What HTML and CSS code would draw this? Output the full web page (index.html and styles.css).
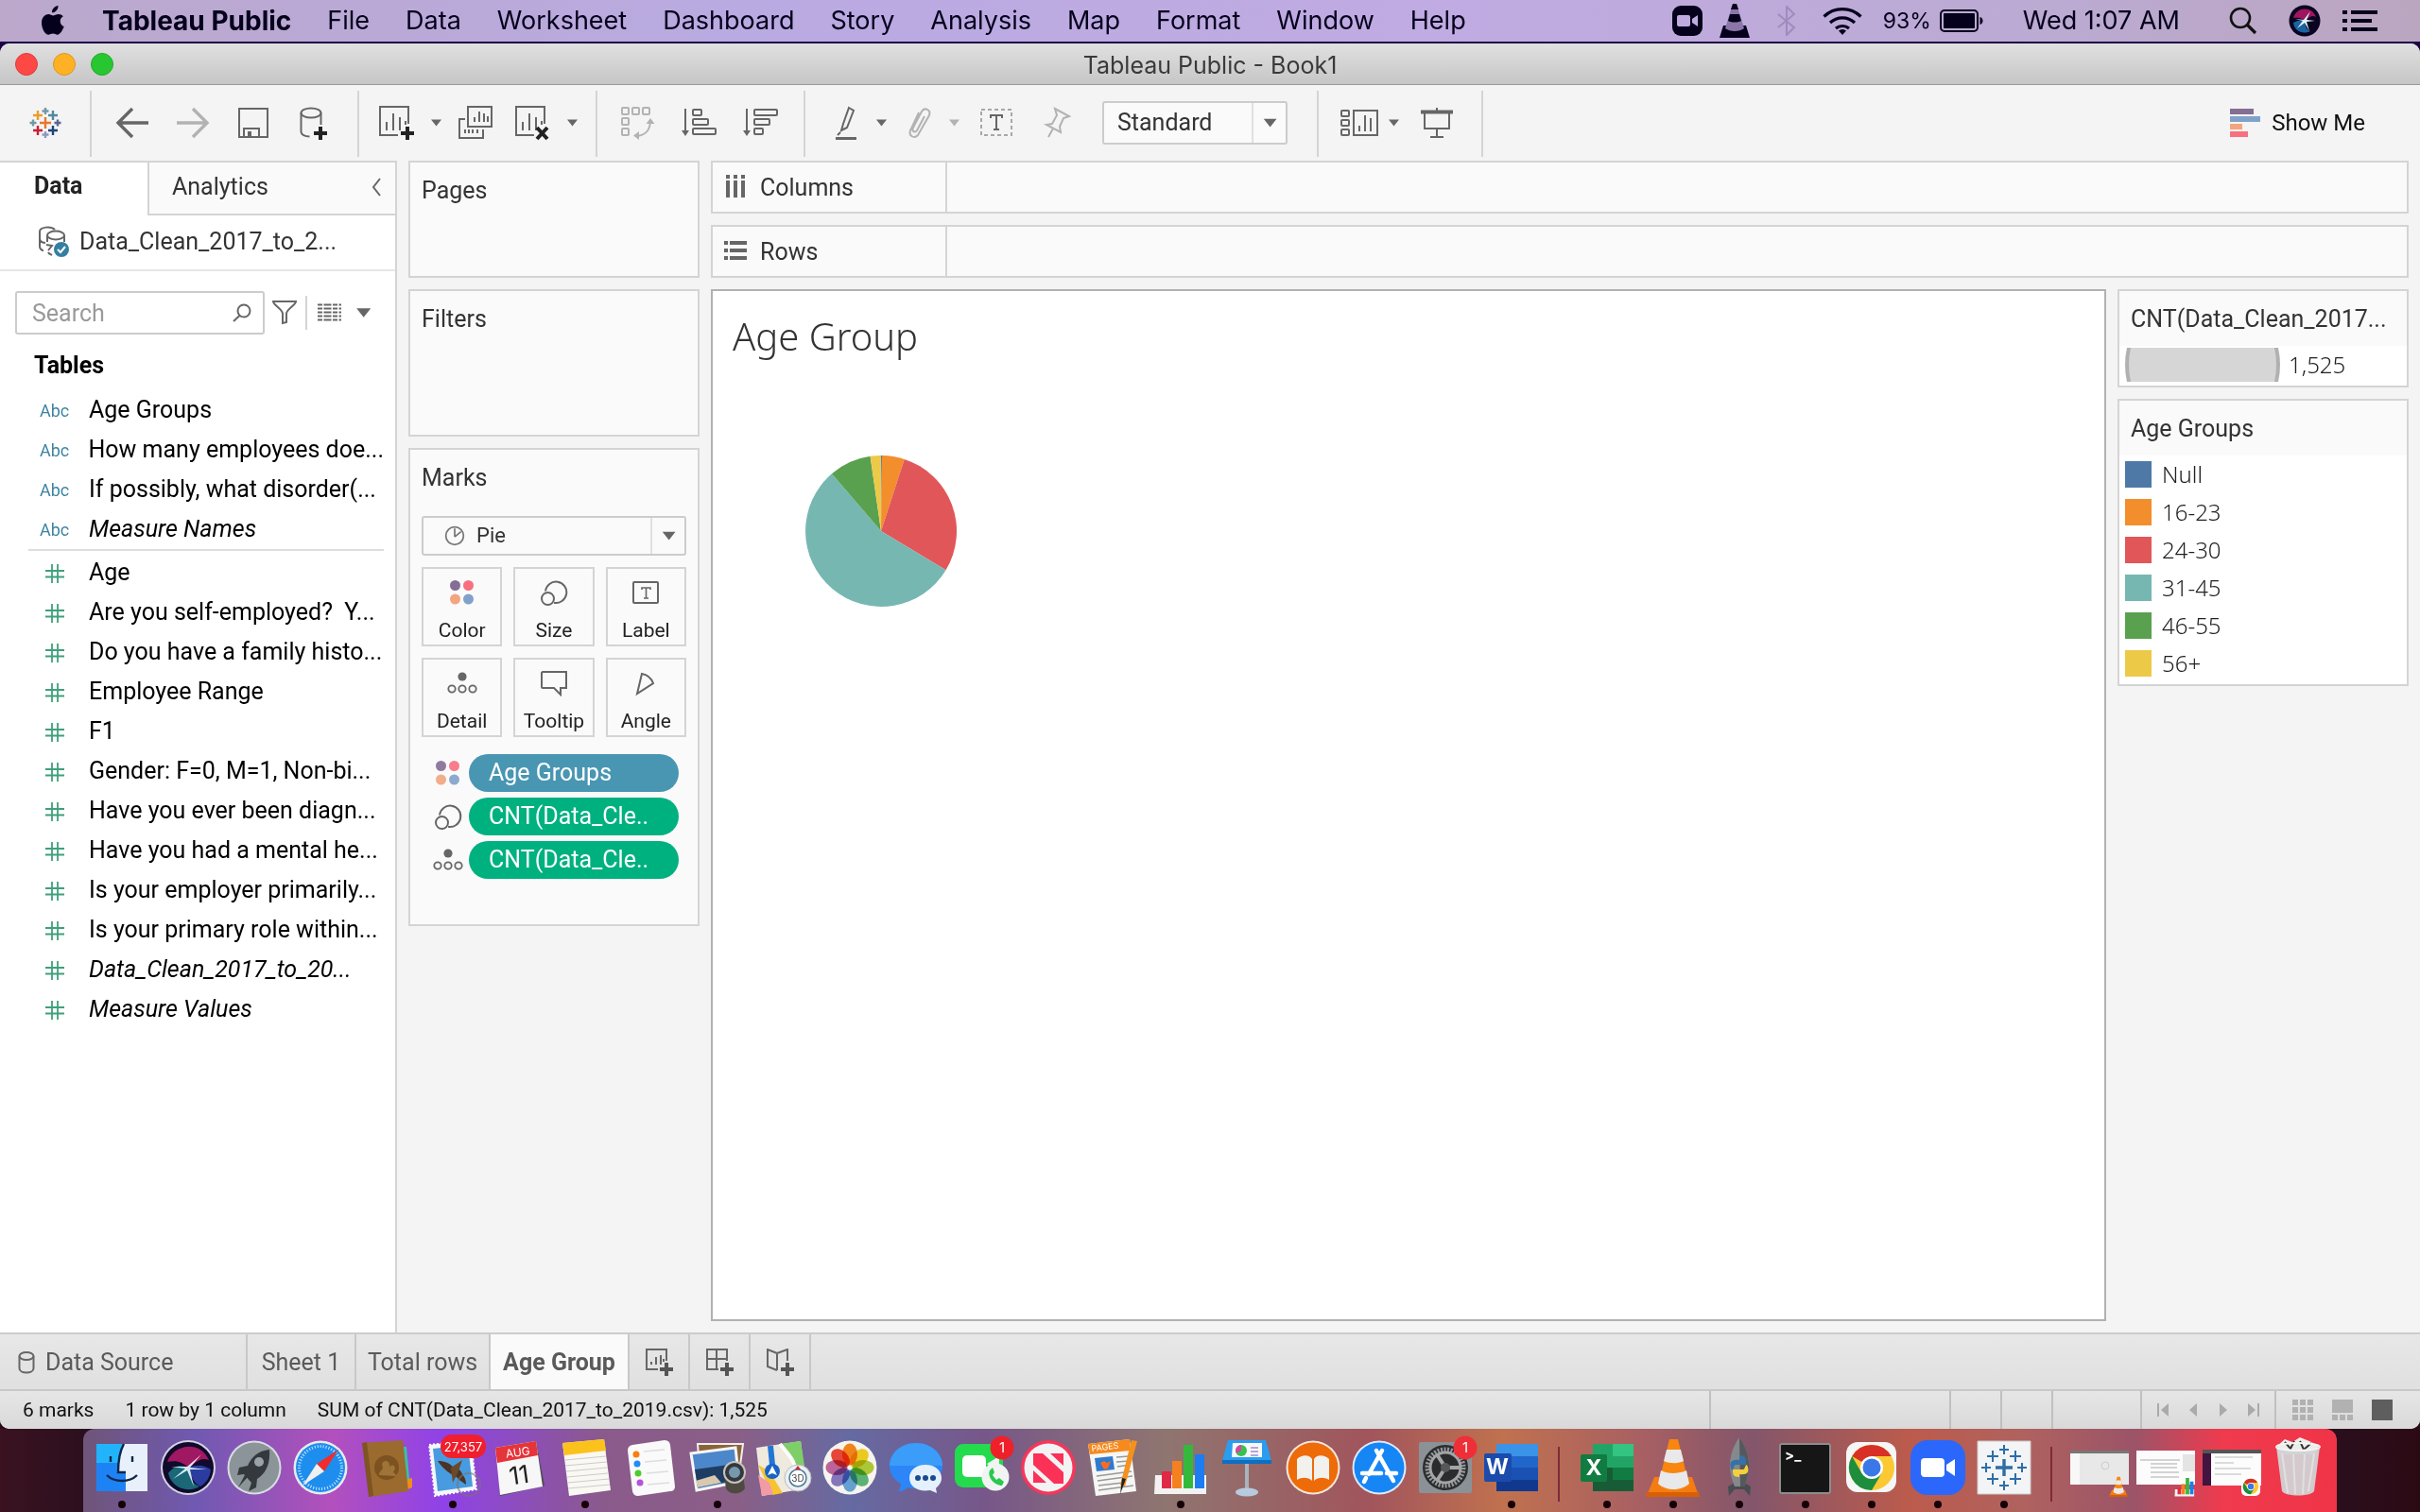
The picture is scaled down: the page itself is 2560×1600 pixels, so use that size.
FILE: index.html
```html
<!DOCTYPE html>
<html lang="en">
<head>
<meta charset="utf-8">
<title>Tableau Public - Book1</title>
<link rel="stylesheet" href="styles.css">
</head>
<body>
<svg class="sprite" aria-hidden="true">
  <symbol id="caret" viewBox="0 0 16 16"><path d="M3 4.500h11l-5.500 7z" fill="currentColor"/></symbol>
  <symbol id="hash" viewBox="0 0 20 20"><path d="M7 0v20M13 0v20M0 7h20M0 13.500h20" stroke="#3fa07c" stroke-width="1.800" fill="none"/></symbol>
  <symbol id="dots4" viewBox="0 0 28 28"><circle cx="6.500" cy="6.500" r="5.500" fill="#856e96"/><circle cx="20.500" cy="6.500" r="5.500" fill="#f87080"/><circle cx="6.500" cy="21" r="5.500" fill="#f2a57e"/><circle cx="20.500" cy="21" r="5.500" fill="#80a2ca"/></symbol>
  <symbol id="size" viewBox="0 0 30 28"><g fill="none" stroke="#666" stroke-width="2"><path d="M6 12.500a11.200 11.200 0 1 1 9 12.300"/><circle cx="8.500" cy="20.500" r="6.500"/></g></symbol>
  <symbol id="detail" viewBox="0 0 32 24"><circle cx="16" cy="5" r="4.600" fill="#666"/><g fill="none" stroke="#666" stroke-width="1.800"><circle cx="5" cy="18" r="3.700"/><circle cx="16" cy="18" r="3.700"/><circle cx="27" cy="18" r="3.700"/></g></symbol>
  <symbol id="cone" viewBox="0 0 64 64"><path d="M12 42h40l7 20H4z" fill="#f57c12"/><path d="M4 58h55l1 5H3z" fill="#d95f06"/><path d="M28 2h9l12 49c-9 7-24 7-33 0z" fill="#f8860f"/><path d="M25 13h15l3 12c-6 3-15 3-21 0zM19 35c7 4 19 4 27 0l3 14c-9 8-24 8-33 0z" fill="#e9e9ec"/></symbol>
  <symbol id="chrome" viewBox="0 0 64 64"><circle cx="32" cy="32" r="24" fill="#fcc934"/><path d="M32 32 11.200 20A24 24 0 0 1 52.800 20H32z" fill="#d93025"/><path d="M11.200 20A24 24 0 0 0 32 56l10.500-18L32 32l-10.500 6z" fill="#1e8e3e"/><circle cx="32" cy="32" r="12" fill="#fff"/><circle cx="32" cy="32" r="9.500" fill="#3b78e7"/></symbol>
  <symbol id="bars" viewBox="0 0 64 64"><path d="M5 40h54v20H4z" fill="#f2f2f2"/><path d="M12 36h10v18H12z" fill="#e02a45"/><path d="M23 25h10v29H23z" fill="#f58020"/><path d="M35 8h10v46H35z" fill="#35b93c"/><path d="M47 18h10v36H47z" fill="#1d7df0"/></symbol>
  <symbol id="siri" viewBox="0 0 64 64"><circle cx="32" cy="32" r="29" fill="#d6d2e0"/><circle cx="32" cy="32" r="27" fill="#100a2c"/><path d="M10 26c6-18 34-24 44-2-10-4-14 4-22 8-6-6-12-8-22-6z" fill="#c41a70" opacity=".8"/><path d="M11 38c8-10 16-8 21-6 2 8 2 16 12 20-14 8-30 0-33-14z" fill="#1f9aa0" opacity=".65"/><path d="M32 32c10-4 18-2 24 2-1 10-6 15-11 18-8-4-10-12-13-20z" fill="#3a58e0" opacity=".65"/><path d="M14 31l17 0 15-13-12 14 18 2-18 0 4 18-7-17-15 9 13-11z" fill="#e8fbff" opacity=".9"/></symbol>
</svg>

<header class="menubar">
  <nav class="menus">
    <svg class="apple" viewBox="0 0 28 34"><path fill="#05001c" d="M19.500 1c.3 3.800-3 7.500-6.500 7.300C12.600 4.800 16 1.300 19.500 1zM24.800 12.200c-4.600 2.800-3.900 9 .9 10.900-1.200 3.500-4 8.700-7 8.700-1.800 0-2.500-1.200-4.700-1.200s-3 1.200-4.700 1.200C5.300 31.800 2 24.500 2 19.200c0-6.500 4.300-9.200 7.200-9.200 2 0 3.800 1.400 5 1.400 1.300 0 3.200-1.500 5.800-1.500 1.700 0 3.500.7 4.800 2.300z"/></svg>
    <a href="#" class="app">Tableau Public</a><a href="#">File</a><a href="#">Data</a><a href="#">Worksheet</a><a href="#">Dashboard</a><a href="#">Story</a><a href="#">Analysis</a><a href="#">Map</a><a href="#">Format</a><a href="#">Window</a><a href="#">Help</a>
  </nav>
  <div class="extras">
    <svg width="32" height="32" viewBox="0 0 32 32"><rect width="32" height="32" rx="9" fill="#05001c"/><rect x="5" y="10" width="14" height="12" rx="2" fill="#c0abe0"/><path d="M21 14l6-4v12l-6-4z" fill="#c0abe0"/></svg>
    <svg class="vlc" width="32" height="36" viewBox="0 0 32 36"><path d="M4 23h24l4 13H0z" fill="#05001c"/><path d="M14 0h4l8 26c-5 4-15 4-20 0z" fill="#8a76a8"/><path d="M14 0h4l2 6h-8zM11 11h10l2 7c-4 2-10 2-14 0z" fill="#05001c"/></svg>
    <svg width="20" height="32" viewBox="0 0 20 32"><path d="M1 9l17 14-8 8V1l8 8L1 23" fill="none" stroke="#9f8cbe" stroke-width="2"/></svg>
    <svg class="wifi" width="42" height="30" viewBox="0 0 42 30"><g fill="none" stroke="#05001c" stroke-width="3.200"><path d="M1.500 10.500a28 28 0 0 1 39 0"/><path d="M8 17a19 19 0 0 1 26 0"/><path d="M14 23a11 11 0 0 1 14 0"/></g><path d="M17 25.500a6 6 0 0 1 8 0L21 30z" fill="#05001c"/></svg>
    <span class="percent">93%</span>
    <svg width="46" height="24" viewBox="0 0 46 24"><rect x="1" y="1" width="39" height="22" rx="4" fill="none" stroke="#05001c" stroke-width="2"/><rect x="4" y="4" width="33" height="16" rx="1" fill="#05001c"/><path d="M42.500 8c4 1 4 7 0 8z" fill="#05001c"/></svg>
    <span class="clock">Wed 1:07 AM</span>
    <svg width="30" height="30" viewBox="0 0 30 30"><g fill="none" stroke="#111" stroke-width="2.600"><circle cx="12" cy="12" r="10"/><path d="M19 19l9 9" stroke-width="3.200"/></g></svg>
    <svg class="siri-mini" width="34" height="34" viewBox="0 0 34 34"><circle cx="17" cy="17" r="16.500" fill="#0a0420"/><path d="M5 14C8 2 25 1 29 13c-5-3-8 1-12 4-3-3-7-4-12-3z" fill="#c41a70" opacity=".8"/><path d="M5 19c5-3 8-3 12-2 1 5 1 9 6 11-8 4-17 0-18-9z" fill="#1f7cc0" opacity=".8"/><path d="M7 15l9 1 7-9-4 9 9 1-9 1 3 10-5-9-8 6 6-8z" fill="#dffaff"/></svg>
    <svg width="38" height="22" viewBox="0 0 38 22"><path d="M0 2h5M9 2h28M0 11h5M9 11h22M0 20h5M9 20h28" stroke="#05001c" stroke-width="4"/></svg>
  </div>
</header>

<main class="window">
  <div class="titlebar">
    <div class="lights"><button class="red" aria-label="Close"></button><button class="amber" aria-label="Minimize"></button><button class="green" aria-label="Zoom"></button></div>
    <h1>Tableau Public - Book1</h1>
    <span></span>
  </div>

  <div class="toolbar">
    <div class="group g-logo">
      <button aria-label="Start page"><svg class="ic" viewBox="0 0 40 40"><g fill="none" stroke-width="2.400"><path d="M20 14v12M14 20h12" stroke="#e8762c"/><path d="M12 7v10M7 12h10" stroke="#eb9d2e"/><path d="M28 7v10M23 12h10" stroke="#4f8a9e"/><path d="M12 23v10M7 28h10" stroke="#c72035"/><path d="M28 23v10M23 28h10" stroke="#1f447e"/><path d="M20 4v7M16.500 7.500h7" stroke="#7199a6"/><path d="M20 29v7M16.500 32.500h7" stroke="#8a9ac0"/><path d="M7 16.500v7M3.500 20h7" stroke="#7199a6"/><path d="M33 16.500v7M29.500 20h7" stroke="#5b6591"/></g></svg></button>
    </div>
    <div class="group g-file">
      <button aria-label="Back"><svg class="ic" viewBox="0 0 40 40"><path d="M37 20H5M20 5L5 20l15 15" fill="none" stroke="#666" stroke-width="3.400"/></svg></button>
      <button aria-label="Forward"><svg class="ic" viewBox="0 0 40 40"><path d="M3 20h32M20 5l15 15-15 15" fill="none" stroke="#b2b2b2" stroke-width="3.400"/></svg></button>
      <button aria-label="Save"><svg class="ic" viewBox="0 0 40 40"><g fill="none" stroke="#666" stroke-width="2"><path d="M5 5h30v30H5z"/><path d="M10 35v-9h16v9"/></g><path d="M14 29h4v6h-4z" fill="#666"/></svg></button>
      <button aria-label="New data source"><svg class="ic" viewBox="0 0 40 40"><g fill="none" stroke="#666" stroke-width="2"><ellipse cx="17" cy="9.500" rx="10.500" ry="5"/><path d="M6.500 9.500v20c0 3 4 5 9 5M27.500 9.500V22"/></g><path d="M27 24v14M20 31h14" stroke="#222" stroke-width="4"/></svg></button>
    </div>
    <div class="group g-sheet">
      <button aria-label="New worksheet"><svg class="ic" viewBox="0 0 40 40"><path d="M22 33H3V3h30v18M10 28v-9M17 28V10M24 28V14M30 22v-4" fill="none" stroke="#666" stroke-width="2"/><path d="M32 24v14M25 31h14" stroke="#222" stroke-width="4"/></svg></button>
      <button class="drop" aria-label="New worksheet options"><svg><use href="#caret"/></svg></button>
      <button aria-label="Duplicate"><svg class="ic" viewBox="0 0 40 40"><g fill="none" stroke="#666" stroke-width="2"><path d="M12 3h25v21H12zM19 19v-5M24 19V8M29 19v-9M33 19v-6M9 16H3v20h25v-9"/><path d="M9 31v-4M13 31v-4M17 31v-4M22 31v-4"/></g></svg></button>
      <button class="gap20" aria-label="Clear sheet"><svg class="ic" viewBox="0 0 40 40"><path d="M22 33H3V3h30v18M10 28v-9M17 28V10M24 28V14M30 22v-4" fill="none" stroke="#666" stroke-width="2"/><path d="M25 25l11 12M36 25L25 37" stroke="#222" stroke-width="4"/></svg></button>
      <button class="drop" aria-label="Clear options"><svg><use href="#caret"/></svg></button>
    </div>
    <div class="group g-sort">
      <button aria-label="Swap rows and columns"><svg class="ic" viewBox="0 0 40 40"><g fill="none" stroke="#b2b2b2" stroke-width="2"><rect x="3" y="4" width="7" height="7" rx="1"/><rect x="14" y="4" width="7" height="7" rx="1"/><rect x="25" y="4" width="7" height="7" rx="1"/><rect x="3" y="15" width="7" height="7" rx="1"/><rect x="3" y="26" width="7" height="7" rx="1"/><path d="M17 34c10 0 16-6 16-17"/></g><path d="M28.500 21l4.500-6 4.500 6zM21 29v9l-6-4.500z" fill="#b2b2b2"/></svg></button>
      <button aria-label="Sort ascending"><svg class="ic" viewBox="0 0 40 40"><g fill="none" stroke="#666" stroke-width="2"><path d="M5 5v26"/><rect x="13" y="6" width="9" height="6" rx="1"/><rect x="13" y="16" width="16" height="6" rx="1"/><rect x="13" y="26" width="24" height="6" rx="1"/></g><path d="M1 28h8l-4 6z" fill="#666"/></svg></button>
      <button aria-label="Sort descending"><svg class="ic" viewBox="0 0 40 40"><g fill="none" stroke="#666" stroke-width="2"><path d="M5 5v26"/><rect x="13" y="6" width="24" height="6" rx="1"/><rect x="13" y="16" width="16" height="6" rx="1"/><rect x="13" y="26" width="9" height="6" rx="1"/></g><path d="M1 28h8l-4 6z" fill="#666"/></svg></button>
    </div>
    <div class="group g-annot">
      <button aria-label="Highlight"><svg class="ic narrow" viewBox="0 0 32 40"><path d="M18 4l5 3-7 18-6 3 2-7zM9 30l-3 3" fill="none" stroke="#666" stroke-width="2"/><path d="M4 36.500h22" stroke="#666" stroke-width="3"/></svg></button>
      <button class="drop" aria-label="Highlight options"><svg><use href="#caret"/></svg></button>
      <button aria-label="Group members"><svg class="ic narrow" viewBox="0 0 32 40"><path d="M21 13l-8 15c-2 3-6 1-4-3l9-17c3-5 10-2 8 4L14 33c-4 4-10 1-8-5L15 9" fill="none" stroke="#b2b2b2" stroke-width="2"/></svg></button>
      <button class="drop dim" aria-label="Group options"><svg><use href="#caret"/></svg></button>
      <button aria-label="Show mark labels"><svg class="ic" viewBox="0 0 40 40"><rect x="4" y="6" width="32" height="27" fill="none" stroke="#a8a8a8" stroke-width="2" stroke-dasharray="4 3"/><path d="M14 15v-3h12v3M20 12v15M17 27h6" fill="none" stroke="#666" stroke-width="2"/></svg></button>
      <button class="pin" aria-label="Fix axes"><svg class="ic narrow" viewBox="0 0 32 40"><path d="M14 5l15 8-6 2-4 9 1 6-15-8 6-1 5-9zM12 26L7 35" fill="none" stroke="#b2b2b2" stroke-width="2"/></svg></button>
      <div class="select fit"><select aria-label="Fit"><option>Standard</option></select><svg><use href="#caret"/></svg></div>
    </div>
    <div class="group g-view">
      <button aria-label="Show cards"><svg class="ic" viewBox="0 0 40 40"><g fill="none" stroke="#666" stroke-width="2"><rect x="1" y="7" width="8" height="6" rx="1"/><rect x="1" y="17" width="8" height="6" rx="1"/><rect x="1" y="27" width="8" height="6" rx="1"/><path d="M14 7h25v26H14zM20 29v-6M26 29V12M32 29V15"/></g></svg></button>
      <button class="drop" aria-label="Card options"><svg><use href="#caret"/></svg></button>
      <button aria-label="Presentation mode"><svg class="ic" viewBox="0 0 40 40"><path d="M3 8.500h34" stroke="#666" stroke-width="4"/><path d="M20 4v4M7 10v16h26V10M20 26v9M13 35h14" fill="none" stroke="#666" stroke-width="2"/></svg></button>
    </div>
    <button class="showme"><svg width="32" height="30" viewBox="0 0 32 30"><path d="M0 0h25v6H0z" fill="#856e96"/><path d="M0 8h32v6H0z" fill="#80a2ca"/><path d="M0 16h13v6H0z" fill="#f2a57e"/><path d="M0 24h19v6H0z" fill="#f87080"/></svg>Show Me</button>
  </div>

  <div class="work">
    <aside class="datapane">
      <div class="panetabs">
        <button class="on">Data</button>
        <button class="off">Analytics <svg width="12" height="20" viewBox="0 0 12 20"><path d="M10 1L3 10l7 9" fill="none" stroke="#666" stroke-width="2"/></svg></button>
      </div>
      <div class="source">
        <svg width="34" height="34" viewBox="0 0 34 34"><g fill="none" stroke="#666" stroke-width="2"><path d="M18 4C14 0 2 1 2 6v16c0 2 2 4 4 4M2 14c1 3 3 4 6 4"/><ellipse cx="19" cy="10" rx="9" ry="4.500"/><path d="M10 10v7M28 10v7M9 20l6 1-4 5M11 28c1 2 2 2 4 3"/></g><circle cx="25" cy="25" r="8" fill="#357ea3"/><path d="M21 25l3 3 5-6" fill="none" stroke="#fff" stroke-width="2"/></svg>
        <span>Data_Clean_2017_to_2...</span>
      </div>
      <div class="searchrow">
        <label class="search"><input type="text" placeholder="Search" aria-label="Search fields"><svg width="20" height="20" viewBox="0 0 20 20"><circle cx="12" cy="8" r="6.500" fill="none" stroke="#666" stroke-width="2"/><path d="M8 12.500L1 19" stroke="#666" stroke-width="2"/></svg></label>
        <button aria-label="Filter fields"><svg width="28" height="28" viewBox="0 0 28 28"><path d="M2 2h24c0 4-10 8-10 13v9l-4 1V15C12 10 2 6 2 2z" fill="none" stroke="#666" stroke-width="2"/></svg></button>
        <i class="vline"></i>
        <button aria-label="View options"><svg width="26" height="20" viewBox="0 0 26 20"><path d="M0 1.500h25M0 5.500h25M0 9.500h25M0 13.500h25M0 17.500h25" stroke="#666" stroke-width="2" stroke-dasharray="5 1.500 8 1.500"/></svg></button>
        <button class="big-caret" aria-label="Pane menu"><svg width="22" height="22"><use href="#caret"/></svg></button>
      </div>
      <h2>Tables</h2>
      <ul class="fields dims">
        <li><b>Abc</b>Age Groups</li><li><b>Abc</b>How many employees doe...</li><li><b>Abc</b>If possibly, what disorder(...</li><li class="it"><b>Abc</b>Measure Names</li>
      </ul>
      <ul class="fields measures">
        <li><svg><use href="#hash"/></svg>Age</li><li><svg><use href="#hash"/></svg>Are you self-employed?&nbsp; Y...</li><li><svg><use href="#hash"/></svg>Do you have a family histo...</li><li><svg><use href="#hash"/></svg>Employee Range</li><li><svg><use href="#hash"/></svg>F1</li><li><svg><use href="#hash"/></svg>Gender: F=0, M=1, Non-bi...</li><li><svg><use href="#hash"/></svg>Have you ever been diagn...</li><li><svg><use href="#hash"/></svg>Have you had a mental he...</li><li><svg><use href="#hash"/></svg>Is your employer primarily...</li><li><svg><use href="#hash"/></svg>Is your primary role within...</li><li class="it"><svg><use href="#hash"/></svg>Data_Clean_2017_to_20...</li><li class="it"><svg><use href="#hash"/></svg>Measure Values</li>
      </ul>
    </aside>

    <section class="cards">
      <div class="card pages"><h3>Pages</h3></div>
      <div class="card filters"><h3>Filters</h3></div>
      <div class="card marks">
        <h3>Marks</h3>
        <div class="select marktype"><svg class="lead" viewBox="0 0 20 20"><g fill="none" stroke="#777" stroke-width="1.600"><circle cx="10" cy="10" r="8.500"/><path d="M10 11V3M10 11l6-5"/></g></svg><select aria-label="Mark type"><option>Pie</option></select><svg><use href="#caret"/></svg></div>
        <div class="props">
          <button><svg width="28" height="28"><use href="#dots4"/></svg>Color</button>
          <button><svg width="30" height="28"><use href="#size"/></svg>Size</button>
          <button><svg width="28" height="28" viewBox="0 0 28 28"><g fill="none" stroke="#666" stroke-width="2"><rect x="1" y="3" width="26" height="22" rx="1"/><path d="M10 11V9h9v2M14.500 9v11M12 20h5" stroke-width="1.600"/></g></svg>Label</button>
          <button><svg width="32" height="28"><use href="#detail"/></svg>Detail</button>
          <button><svg width="28" height="28" viewBox="0 0 28 28"><path d="M2 2h25v17h-6v7l-7-7H2a1 1 0 0 1-1-1V3z" fill="none" stroke="#666" stroke-width="2"/></svg>Tooltip</button>
          <button><svg width="28" height="28" viewBox="0 0 28 28"><path d="M10 4c6 1 10 5 12 10L5 25z" fill="none" stroke="#666" stroke-width="2"/></svg>Angle</button>
        </div>
        <div class="pills">
          <div><svg width="28" height="28" opacity=".9"><use href="#dots4"/></svg><button class="blue">Age Groups</button></div>
          <div><svg width="30" height="28"><use href="#size"/></svg><button>CNT(Data_Cle..</button></div>
          <div><svg width="32" height="24"><use href="#detail"/></svg><button>CNT(Data_Cle..</button></div>
        </div>
      </div>
    </section>

    <section class="canvas">
      <div class="shelf"><h3><svg width="24" height="24" viewBox="0 0 24 24"><path d="M4 0v4M12 0v4M20 0v4M4 6v18M12 6v18M20 6v18" stroke="#666" stroke-width="4"/></svg>Columns</h3></div>
      <div class="shelf"><h3><svg width="24" height="24" viewBox="0 0 24 24"><path d="M0 4h4M6 4h18M0 12h4M6 12h18M0 20h4M6 20h18" stroke="#666" stroke-width="4"/></svg>Rows</h3></div>
      <div class="viz">
        <div class="sheet">
          <h2>Age Group</h2>
          <svg width="160" height="160" viewBox="0 0 160 160" role="img" aria-label="Age Group pie chart">
            <path d="M80 80V0A80 80 0 0 1 81 0z" fill="#4e79a7"/>
            <path d="M80 80L81 0A80 80 0 0 1 104.700 3.900z" fill="#f28e2b"/>
            <path d="M80 80L104.700 3.900A80 80 0 0 1 148.600 121.200z" fill="#e15759"/>
            <path d="M80 80L148.600 121.200A80 80 0 1 1 27.900 19.300z" fill="#76b7b2"/>
            <path d="M80 80L27.900 19.300A80 80 0 0 1 68.600 .8z" fill="#59a14f"/>
            <path d="M80 80L68.600 .8A80 80 0 0 1 80 0z" fill="#edc948"/>
          </svg>
        </div>
        <div class="legends">
          <div class="card legend"><h3>CNT(Data_Clean_2017...</h3>
            <div class="sizeitem"><svg width="164" height="36" viewBox="0 0 164 36"><path d="M2 0h160q4 18 0 36H2q-4-18 0-36z" fill="#b1b1b1"/><path d="M6 0h152q4 18 0 36H6q-4-18 0-36z" fill="#d6d6d6"/></svg>1,525</div></div>
          <div class="card legend"><h3>Age Groups</h3>
            <ul><li class="c1">Null</li><li class="c2">16-23</li><li class="c3">24-30</li><li class="c4">31-45</li><li class="c5">46-55</li><li class="c6">56+</li></ul></div>
        </div>
      </div>
    </section>
  </div>

  <div class="tabs">
    <button class="ds"><svg width="18" height="24" viewBox="0 0 18 24"><g fill="none" stroke="#666" stroke-width="2"><ellipse cx="9" cy="5" rx="7.500" ry="4"/><path d="M1.500 5v13c0 6 15 6 15 0V5"/></g></svg>Data Source</button>
    <button class="t1">Sheet 1</button><button class="t2">Total rows</button><button class="t3 on">Age Group</button>
    <button class="new" aria-label="New worksheet"><svg width="30" height="30" viewBox="0 0 30 30"><path d="M13 22H1V1h21v12M6 17v-3M11 17V9M16 17V7M19 14v-3" fill="none" stroke="#666" stroke-width="2"/><path d="M22 15v14M15 22h14" stroke="#555" stroke-width="4"/></svg></button>
    <button class="new" aria-label="New dashboard"><svg width="30" height="30" viewBox="0 0 30 30"><path d="M13 22H1V1h21v12M11 1v21M1 11h21" fill="none" stroke="#666" stroke-width="2"/><path d="M22 15v14M15 22h14" stroke="#555" stroke-width="4"/></svg></button>
    <button class="new" aria-label="New story"><svg width="30" height="30" viewBox="0 0 30 30"><path d="M11 23L1 19V1l10 4v18M11 5l11-4v12" fill="none" stroke="#666" stroke-width="2"/><path d="M22 15v14M15 22h14" stroke="#555" stroke-width="4"/></svg></button>
  </div>

  <footer class="status">
    <div class="facts"><span>6 marks</span><span>1 row by 1 column</span><span>SUM of CNT(Data_Clean_2017_to_2019.csv): 1,525</span></div>
    <i class="s1"></i><i class="s2"></i><i class="s2"></i><i class="s3"></i>
    <div class="pager">
      <button aria-label="First"><svg viewBox="0 0 16 16"><path d="M3 1v14" stroke="#aaa" stroke-width="2"/><path d="M14 1v14L6 8z" fill="#aaa"/></svg></button><button aria-label="Previous"><svg viewBox="0 0 16 16"><path d="M12 1v14L4 8z" fill="#aaa"/></svg></button><button aria-label="Next"><svg viewBox="0 0 16 16"><path d="M4 1v14l8-7z" fill="#aaa"/></svg></button><button aria-label="Last"><svg viewBox="0 0 16 16"><path d="M13 1v14" stroke="#aaa" stroke-width="2"/><path d="M2 1v14l8-7z" fill="#aaa"/></svg></button>
    </div>
    <div class="views">
      <button aria-label="Sheet sorter"><svg viewBox="0 0 22 22"><path d="M0 3h22M0 11h22M0 19h22" stroke="#b1b1b1" stroke-width="6" stroke-dasharray="6 2"/></svg></button><button aria-label="Filmstrip"><svg viewBox="0 0 22 22"><path d="M0 0h22v14H0z" fill="#b1b1b1"/><path d="M0 19h22" stroke="#b1b1b1" stroke-width="6" stroke-dasharray="6 2"/></svg></button><button aria-label="Show tabs"><svg viewBox="0 0 22 22"><path d="M0 0h22v22H0z" fill="#5e5e5e"/></svg></button>
    </div>
  </footer>
</main>

<footer class="desk">
  <div class="dock">
    <div class="app-icon run"><svg viewBox="0 0 64 64"><path d="M5 7h54v50H5z" fill="#e8f1fb"/><path d="M5 7h29c-5 9-6 18-6 30h8v20H5z" fill="#1d83f5"/><path d="M5 7h29c-4 7-5 12-6 20H5z" fill="#22b4fa"/><path d="M20 20v6M43 20v6M34 7c-5 9-6 18-6 30h8M16 40c8 8 24 8 32 0" stroke="#10264a" stroke-width="2.400" fill="none"/></svg></div>
    <div class="app-icon"><svg><use href="#siri"/></svg></div>
    <div class="app-icon"><svg viewBox="0 0 64 64"><circle cx="32" cy="32" r="28.500" fill="#d8dde0"/><circle cx="32" cy="32" r="26.500" fill="#8b9599"/><path d="M48 13c-12 1-19 8-23 17l-9 2-2 8 7-1 8 9-3 9 8-4 1-9c9-6 14-15 13-31z" fill="#34393d"/><circle cx="37" cy="26" r="5" fill="#9aa3a8"/><path d="M15 53l8-15 3 3z" fill="#34393d"/></svg></div>
    <div class="app-icon"><svg viewBox="0 0 64 64"><circle cx="32" cy="32" r="28.500" fill="#e8eaee"/><circle cx="32" cy="32" r="26" fill="#1d8eee"/><circle cx="32" cy="32" r="22.500" fill="none" stroke="#cfe8ff" stroke-width="3" stroke-dasharray="1 2"/><path d="M51 13L36 36l-8-8z" fill="#f22c2c"/><path d="M13 51l15-23 8 8z" fill="#f0f0f0"/></svg></div>
    <div class="app-icon"><svg viewBox="0 0 64 64"><path d="M50 10h3l4 44-6 1z" fill="#3ac1a0"/><path d="M54 44l5-1v10l-5 2z" fill="#f08c1c"/><path d="M6 6l43-3 6 54-41 6z" fill="#9a6a2f"/><path d="M6 6l5-1 7 57-5 1z" fill="#7e5422"/><circle cx="32" cy="32" r="13" fill="#7c5220"/><path d="M24 40c0-5 4-5 4-8-4-8 8-10 7-1 5-5 8 3 4 5 0 2 3 2 3 5z" fill="#a07438"/></svg></div>
    <div class="app-icon run"><svg viewBox="0 0 64 64"><path d="M7 8l44-5 6 52-44 7z" fill="#f5f6f8" stroke="#fff" stroke-width="2" stroke-dasharray="2 2"/><path d="M11 12l37-4 5 44-37 5z" fill="#489be0"/><path d="M16 25c8 0 12 2 17 7 4 0 8 3 9 7 3 4 4 6 4 11-5-4-7-4-10-8-5-2-14-8-20-17z" fill="#4a3423"/><path d="M30 32l12-8-4 12-6 12z" fill="#6a4a2c"/><circle cx="49" cy="50" r="12" fill="none" stroke="#777" stroke-opacity=".6" stroke-width="2"/><rect x="19" y="-3" width="48" height="25" rx="12" fill="#ef1f2d"/><text x="43" y="15" class="badge small">27,357</text></svg></div>
    <div class="app-icon"><svg viewBox="0 0 64 64"><path d="M9 13L50 4l9 47-47 11z" fill="#4b4b50"/><path d="M7 11L50 4l7 48-45 9z" fill="#f7f7f7"/><path d="M7 11L50 4l2 15-43 8z" fill="#e5343a"/><g transform="rotate(-8 32 32)" fill="#fff" text-anchor="middle"><text x="33" y="20" font-size="12">AUG</text><text x="31" y="49" font-size="26" fill="#222">11</text></g></svg></div>
    <div class="app-icon run"><svg viewBox="0 0 64 64"><path d="M8 6l44-4 7 54-44 6z" fill="#f9f8f2"/><path d="M8 6l44-4 2 12-44 5z" fill="#fcc21c"/><path d="M11 24l43-4M11 30l44-4M12 36l44-4M13 42l43-4M13 48l44-4M14 54l44-4" stroke="#ccc" stroke-width="1"/></svg></div>
    <div class="app-icon"><svg viewBox="0 0 64 64"><path d="M12 8l34-5q5 0 6 5l5 44q0 5-5 5l-34 5q-5 0-6-5L7 14q0-5 5-6z" fill="#fafafa"/><path d="M24 15l22-2M25 26l23-2M27 38l23-2M28 50l23-2" stroke="#ddd" stroke-width="1.500"/><circle cx="16" cy="18" r="3.500" fill="#fa7c13"/><circle cx="17" cy="28" r="3.500" fill="#1f8df6"/><circle cx="18" cy="38" r="3.500" fill="#4fcb2b"/><circle cx="20" cy="48" r="3.500" fill="#b653d8"/></svg></div>
    <div class="app-icon run"><svg viewBox="0 0 64 64"><path d="M11 7h48l-5 38H14z" fill="#8a6437" stroke="#eee" stroke-width="2"/><path d="M4 17l47-6 4 36-45 9z" fill="#4d87cb" stroke="#f5f5f5" stroke-width="3"/><path d="M8 34l43-6 2 17-42 8z" fill="#1f3c63"/><path d="M9 46l20-6 7 8-25 5z" fill="#d9c8b0"/><path d="M38 32h20l3 22c-4 7-17 7-20 0z" fill="#4e4941"/><circle cx="50" cy="37" r="11" fill="#34383e" stroke="#c6c3bb" stroke-width="2"/><circle cx="50" cy="37" r="6" fill="#7698ac"/></svg></div>
    <div class="app-icon"><svg viewBox="0 0 64 64"><path d="M3 11l47-7 6 50-47 8z" fill="#eeeade"/><path d="M29 7l21-3 6 39-12-3c4-12-8-25-15-33z" fill="#7fcf68"/><path d="M28 7c8 10 20 20 15 35" fill="none" stroke="#fff" stroke-width="4"/><path d="M5 29l12 7 14 23-11 2z" fill="#f7c431"/><path d="M5 40l12 8 4 12-12 2z" fill="#f29aa5"/><path d="M18 9l3 30" stroke="#2276d6" stroke-width="6"/><circle cx="20" cy="36" r="8" fill="#1763c8"/><path d="M20 30l5 10-5-2-5 2z" fill="#fff"/><circle cx="47" cy="43" r="14" fill="#eceff1" stroke="#bbb"/><circle cx="47" cy="43" r="9" fill="#fff" stroke="#47789a" stroke-width="1.500"/><path d="M47 30l3 4h-6z" fill="#d22"/><text x="47" y="47" font-size="10" text-anchor="middle" fill="#444">3D</text></svg></div>
    <div class="app-icon"><svg viewBox="0 0 64 64"><circle cx="32" cy="32" r="28.500" fill="#f6f4ee"/><g class="petals"><ellipse cx="32" cy="18" rx="8" ry="11.500" fill="#f98a1c"/><ellipse cx="32" cy="18" rx="8" ry="11.500" fill="#f3d322" transform="rotate(45 32 32)"/><ellipse cx="32" cy="18" rx="8" ry="11.500" fill="#b2cf38" transform="rotate(90 32 32)"/><ellipse cx="32" cy="18" rx="8" ry="11.500" fill="#5fb97c" transform="rotate(135 32 32)"/><ellipse cx="32" cy="18" rx="8" ry="11.500" fill="#69a8df" transform="rotate(180 32 32)"/><ellipse cx="32" cy="18" rx="8" ry="11.500" fill="#8a7ac8" transform="rotate(225 32 32)"/><ellipse cx="32" cy="18" rx="8" ry="11.500" fill="#c268a4" transform="rotate(270 32 32)"/><ellipse cx="32" cy="18" rx="8" ry="11.500" fill="#ee4a3c" transform="rotate(315 32 32)"/></g></svg></div>
    <div class="app-icon"><svg viewBox="0 0 64 64"><path d="M32 6c16 0 28 11 28 24S48 54 32 54c-3 0-6 0-9-1-3 3-6 4-10 4 2-3 3-5 3-8C8 45 4 38 4 30 4 17 16 6 32 6z" fill="#2c86f8"/><path d="M32 6c16 0 28 11 28 24H4C4 17 16 6 32 6z" fill="#3b9cfa"/><path d="M42 29c10 0 17 6 17 14 0 5-3 8-6 11l1 5-7-3c-13 2-22-4-22-13 0-8 7-14 17-14z" fill="#e4f0fb"/><circle cx="34" cy="43" r="3" fill="#174a93"/><circle cx="42" cy="43" r="3" fill="#174a93"/><circle cx="50" cy="43" r="3" fill="#174a93"/></svg></div>
    <div class="app-icon"><svg viewBox="0 0 64 64"><rect x="3" y="7" width="51" height="46" rx="9" fill="#23db4d"/><rect x="11" y="19" width="25" height="23" rx="5" fill="#fff"/><path d="M37 28l13-8v20z" fill="#f3f3f3"/><circle cx="46" cy="42" r="14.500" fill="#f2f4f3"/><path d="M40 35c-3 7 5 16 13 16l2-4-5-4-3 2-4-5 2-3-2-5z" fill="#28c94e"/><circle cx="53" cy="11" r="12.500" fill="#ef2029"/><text x="53" y="16" class="badge">1</text></svg></div>
    <div class="app-icon"><svg viewBox="0 0 64 64"><circle cx="32" cy="32" r="29" fill="#f6365a"/><circle cx="32" cy="32" r="25.500" fill="#f3f3f4"/><path d="M16 17h10l22 20v12H38L16 29zM16 35l14 13H16zM34 17h14v13z" fill="#fb3158"/></svg></div>
    <div class="app-icon"><svg viewBox="0 0 64 64"><path d="M4 7l44-5 7 55-43 5z" fill="#f6f6f4"/><path d="M4 7l44-5 1 12-43 4z" fill="#f68a1d"/><text x="8" y="15" font-size="9" fill="#fff" transform="rotate(-7 8 15)">PAGES</text><path d="M11 22l19-2 2 14-19 2z" fill="#2f7bd0"/><path d="M17 27l4-2 3 2 4-2-3 8-4 1z" fill="#fb6b21"/><path d="M34 21l13-1M34 26l14-1M35 31l14-2M13 41l37-5M14 46l37-5M15 51l26-3M15 56l37-5" stroke="#999" stroke-width="1.500"/><path d="M50 3l6 1-13 48-5-1z" fill="#f5921d"/><path d="M40 43l4 1-6 16z" fill="#222"/></svg></div>
    <div class="app-icon run"><svg><use href="#bars"/></svg></div>
    <div class="app-icon"><svg viewBox="0 0 64 64"><path d="M30 24h4v34h-4z" fill="#a9b2bd"/><ellipse cx="32" cy="58" rx="12" ry="4.500" fill="#b7cade"/><path d="M12 3h40l6 22H6z" fill="#2b9df0"/><path d="M6 24h52v4H6z" fill="#0d6fc0"/><path d="M17 6h31v15H16z" fill="#f6f8fa"/><circle cx="26" cy="14" r="6" fill="#35c24e"/><path d="M26 14V8a6 6 0 0 0-5 9z" fill="#e43fa0"/><path d="M36 11h8M36 15h8M36 19h8" stroke="#b9a7d8" stroke-width="2"/></svg></div>
    <div class="app-icon"><svg viewBox="0 0 64 64"><circle cx="32" cy="32" r="28.500" fill="#f5e8dc"/><circle cx="32" cy="32" r="26.500" fill="#ee6b0a"/><path d="M15 23c6-6 14-4 16 0v23c-4-4-11-4-16-1zM49 23c-6-6-14-4-16 0v23c4-4 11-4 16-1z" fill="#f3f1ee"/></svg></div>
    <div class="app-icon"><svg viewBox="0 0 64 64"><circle cx="32" cy="32" r="28.500" fill="#dfeafc"/><circle cx="32" cy="32" r="26.500" fill="#1686f5"/><path d="M29 14l18 32M35 14L21 39M14 38h20M40 38h10M18 43l-2 4" stroke="#fff" stroke-width="4.500" stroke-linecap="round"/></svg></div>
    <div class="app-icon"><svg viewBox="0 0 64 64"><rect x="4" y="5" width="56" height="54" rx="2" fill="#8a9298"/><circle cx="32" cy="32" r="24" fill="#2a2c2e"/><circle cx="32" cy="32" r="19" fill="none" stroke="#96999b" stroke-width="5" stroke-dasharray="2 1.500"/><circle cx="32" cy="32" r="16" fill="none" stroke="#a3a5a7" stroke-width="3"/><path d="M32 32h17M32 32l-9 14M32 32l-9-14" stroke="#a3a5a7" stroke-width="4"/><circle cx="32" cy="32" r="5" fill="#55585a"/><circle cx="53" cy="11" r="12.500" fill="#ef2f38"/><text x="53" y="16" class="badge">1</text></svg></div>
    <div class="app-icon run"><svg viewBox="0 0 64 64"><path d="M16 7h44v50H16z" fill="#2166cb"/><path d="M16 7h44v13H16z" fill="#3a93e6"/><path d="M16 32h44v13H16z" fill="#1a51b3"/><path d="M16 45h44v12H16z" fill="#10388e"/><rect x="3" y="17" width="29" height="30" rx="2" fill="#1b4bac"/><text x="17" y="39" class="office">W</text></svg></div>
    <i class="sep"></i>
    <div class="app-icon run"><svg viewBox="0 0 64 64"><path d="M17 7h43v50H17z" fill="#21a465"/><path d="M38 7h22v13H38z" fill="#33c481"/><path d="M17 32h43v25H17z" fill="#185c37"/><path d="M38 32h22v13H38z" fill="#107c41"/><rect x="4" y="18" width="28" height="29" rx="2" fill="#107c41"/><text x="18" y="40" class="office">X</text></svg></div>
    <div class="app-icon run"><svg><use href="#cone"/></svg></div>
    <div class="app-icon run"><svg viewBox="0 0 64 64"><path d="M27 48l-7 4 1 10 6-7h10l6 7 1-10-7-4z" fill="#4a4d50"/><path d="M32 0c10 14 14 32 5 52H27C18 32 22 14 32 0z" fill="#85898c"/><path d="M32 0c10 14 14 32 5 52h-4z" fill="#55595c"/><path d="M32 19c7 0 7 3 7 10H28c-2 0-2 6-4 6-4-9 0-12 8-11z" fill="#3672a8"/><path d="M32 42c-7 0-7-3-7-8h11c2 0 2-5 4-5 4 9-1 11-8 10z" fill="#f6cf3c"/></svg></div>
    <div class="app-icon run"><svg viewBox="0 0 64 64"><rect x="4" y="6" width="55" height="54" rx="3" fill="#8d8d8d"/><rect x="6" y="8" width="51" height="50" rx="1" fill="#161616"/><text x="10" y="24" font-size="15" font-weight="700" fill="#fff">&gt;_</text></svg></div>
    <div class="app-icon run"><svg viewBox="0 0 64 64"><rect x="5" y="5" width="53" height="53" rx="12" fill="#f6f6f6"/><use href="#chrome"/></svg></div>
    <div class="app-icon run"><svg viewBox="0 0 64 64"><rect x="3" y="3" width="58" height="58" rx="18" fill="#2b67fb"/><rect x="14" y="22" width="25" height="20" rx="4" fill="#fff"/><path d="M41 29l9-6v18l-9-6z" fill="#fff"/></svg></div>
    <div class="app-icon run"><svg viewBox="0 0 64 64"><path d="M4 4h56v56H4z" fill="#f3f4f6" stroke="#ccc"/><g fill="none" stroke="#2d6ea6" stroke-width="2"><path d="M32 23v18M23 32h18" stroke-width="3.400"/><path d="M20 14v12M14 20h12M44 14v12M38 20h12M20 38v12M14 44h12M44 38v12M38 44h12M32 8v10M27 13h10M32 46v10M27 51h10M13 27v10M8 32h10M51 27v10M46 32h10"/></g></svg></div>
    <i class="sep"></i>
    <div class="app-icon"><svg viewBox="0 0 64 64"><path d="M1 14h62v36H1z" fill="#e8e8e8"/><path d="M1 14h62v3H1z" fill="#777"/><path d="M1 17h10v33H1z" fill="#f8f8f8"/><circle cx="38" cy="30" r="4" fill="none" stroke="#ccc"/><use href="#cone" x="41" y="40" width="22" height="24"/></svg></div>
    <div class="app-icon"><svg viewBox="0 0 64 64"><path d="M1 14h62v36H1z" fill="#fcfcfc"/><path d="M5 24h42M16 28h28M16 32h28M16 37h30M16 42h30" stroke="#aaa"/><path d="M50 18h13v18H50z" fill="#e4e4e4"/><use href="#bars" x="40" y="40" width="24" height="24"/></svg></div>
    <div class="app-icon"><svg viewBox="0 0 64 64"><path d="M1 13h62v38H1z" fill="#fcfcfc"/><path d="M1 13h62v4H1z" fill="#555"/><path d="M1 17h9v34H1z" fill="#42143f"/><path d="M14 21h40M14 27h20M14 33h38M14 39h28" stroke="#bbb"/><rect x="42" y="42" width="20" height="20" rx="5" fill="#fff"/><use href="#chrome" x="41" y="41" width="22" height="22"/></svg></div>
    <div class="app-icon"><svg viewBox="0 0 64 64"><path d="M10 9l8-7 8 3 8-5 10 4 10 5-4 9H12z" fill="#ecece9"/><path d="M18 5l6 7 4-8M34 4l4 9 8-7" stroke="#333" stroke-width="2" fill="none"/><path d="M9 10c10 5 36 5 46 0l-6 47c-4 6-30 6-34 0z" fill="#d2d2d4" opacity=".95"/><path d="M15 17l6 42M27 18l2 42M39 18l-2 42M49 17l-6 40" stroke="#e0e0e0" stroke-width="2"/><ellipse cx="32" cy="10" rx="23" ry="4" fill="none" stroke="#f4f4f4" stroke-width="2"/></svg></div>
  </div>
</footer>
</body>
</html>
```
FILE: styles.css
```css
* { box-sizing: border-box; }
body {
  margin: 0;
  min-height: 100vh;
  display: flex;
  flex-direction: column;
  background: linear-gradient(#1b0046 0 600px, #2a0b19 1000px);
  font-family: Roboto, "Noto Sans", sans-serif;
  font-size: 25px;
  line-height: 32px;
  color: #333;
}
button, input, select { font: inherit; color: inherit; }
button { border: 0; background: none; padding: 0; margin: 0; white-space: nowrap; }
h1, h2, h3, ul { margin: 0; padding: 0; font-size: inherit; font-weight: 400; }
ul { list-style: none; }
svg { display: block; flex: none; }
.sprite { width: 0; height: 0; position: absolute; }

/* menu bar */
.menubar {
  height: 44px;
  display: flex;
  justify-content: space-between;
  align-items: center;
  background: linear-gradient(90deg, #bba8cb, #b9aae1 30%, #c0abe2 60%, #bbaad2 85%, #bba6c0);
  font-family: Inter, sans-serif;
  font-size: 27px;
  color: #05001c;
}
.menus { display: flex; align-items: center; gap: 38px; padding-left: 42px; }
.menus a { color: inherit; text-decoration: none; }
.menus .app { font-weight: 700; font-size: 28px; }
.apple { width: 28px; height: 34px; }
.extras { display: flex; align-items: center; padding-right: 44px; }
.vlc { margin: 0 29px 0 18px; }
.wifi { margin: 0 22px 0 28px; }
.percent { font-size: 23px; margin-right: 9px; }
.clock { margin: 0 52px 0 42px; }
.siri-mini { margin: 0 23px 0 33px; }

/* window */
.window {
  flex: 1;
  margin-top: 2px;
  display: flex;
  flex-direction: column;
  background: #f4f4f4;
  border-radius: 10px;
  overflow: hidden;
}
.titlebar {
  height: 44px;
  display: grid;
  grid-template-columns: 1fr auto 1fr;
  align-items: center;
  background: linear-gradient(#e0e0e0, #c6c6c6);
  border-bottom: 1px solid #999;
}
.titlebar h1 { font-family: Inter, sans-serif; font-size: 25px; color: #3a3a3a; padding-top: 2px; }
.lights { display: flex; gap: 16px; padding-left: 16px; }
.lights button { width: 24px; height: 24px; border-radius: 50%; }
.red { background: #fe4845; border: 1px solid #dd3c38; }
.amber { background: #feb124; border: 1px solid #dd9720; }
.green { background: #28c732; border: 1px solid #22a82a; }

/* toolbar */
.toolbar { height: 80px; padding: 6px 0 4px; display: flex; }
.group { display: flex; align-items: center; border-right: 2px solid #d4d4d4; padding-bottom: 2px; }
.ic { width: 40px; height: 40px; }
.ic.narrow { width: 32px; }
.drop svg { width: 16px; height: 16px; }
.drop { color: #666; }
.drop.dim { color: #b2b2b2; }
.g-logo { padding-left: 28px; padding-right: 27px; }
.g-file { gap: 24px; padding-left: 23px; padding-right: 26px; }
.g-sheet { padding-left: 19px; padding-right: 17px; }
.g-sheet .drop { margin: 0 14px; }
.g-sheet .drop:last-child { margin-right: 0; }
.gap20 { margin-left: 20px; }
.g-sort { gap: 25px; padding-left: 23px; padding-right: 25px; }
.g-annot { padding-left: 28px; padding-right: 31px; }
.g-annot .drop { margin: 0 17px 0 12px; }
.pin { margin: 0 32px 0 28px; }
.g-view { padding-left: 23px; padding-right: 27px; }
.g-view .drop { margin: 0 18px 0 8px; }
.showme { margin-left: auto; padding: 0 58px 2px 0; display: flex; align-items: center; gap: 12px; font-size: 24px; color: #111; }

.select { display: flex; align-items: center; border: 2px solid #ccc; border-radius: 3px; background: #fafafa; }
.select select { appearance: none; border: 0; background: transparent; padding: 0; flex: 1; height: 100%; outline: 0; }
.select svg:last-child { width: 36px; height: 38px; padding: 9px 7px; border-left: 2px solid #e0e0e0; color: #666; }
.select.fit { width: 196px; height: 46px; padding-left: 14px; }
.select.fit svg:last-child { height: 42px; padding: 11px 7px; }

/* work area */
.work { flex: 1; display: flex; gap: 12px; padding-right: 12px; }
.datapane { width: 420px; background: #fff; border-right: 2px solid #d4d4d4; border-top: 2px solid #d4d4d4; display: flex; flex-direction: column; }
.panetabs { display: flex; height: 56px; }
.panetabs button { display: flex; align-items: center; }
.panetabs .on { width: 156px; padding: 0 0 6px 36px; font-weight: 700; color: #222; }
.panetabs .off { flex: 1; justify-content: space-between; padding: 0 14px 2px 24px; background: #fafafa; border-left: 2px solid #d4d4d4; border-bottom: 2px solid #d4d4d4; }
.source { height: 59px; display: flex; align-items: center; gap: 10px; padding: 0 0 2px 40px; border-bottom: 2px solid #e6e6e6; white-space: nowrap; }
.searchrow { display: flex; align-items: center; padding: 21px 0 0 16px; }
.search { width: 264px; height: 46px; display: flex; align-items: center; padding: 0 12px 0 16px; border: 2px solid #ccc; border-radius: 3px; }
.search input { border: 0; outline: 0; width: 100%; min-width: 0; padding: 2px 0 0; background: none; }
.search input::placeholder { color: #9a9a9a; opacity: 1; }
.search + button { margin: 0 8px 0 7px; }
.vline { width: 2px; height: 36px; background: #d4d4d4; }
.vline + button { margin: 0 11px 0 11px; }
.big-caret { color: #666; }
.datapane h2 { padding: 17px 0 0 36px; line-height: 32px; font-weight: 700; color: #000; }
.fields { color: #000; }
.fields li { height: 42px; display: flex; align-items: center; padding-left: 94px; white-space: nowrap; }
.fields b { width: 52px; margin-left: -52px; font-weight: 400; font-style: normal; font-size: 18px; color: #3d84a2; padding-top: 2px; }
.fields svg { width: 20px; height: 20px; margin: 2px 26px 0 -46px; }
.fields .it { font-style: italic; }
.dims { margin: 10px 12px 0 30px; border-bottom: 2px solid #ddd; }
.dims li { padding-left: 64px; }
.measures { margin-top: 2px; }

.cards { width: 308px; display: flex; flex-direction: column; gap: 12px; }
.card { background: #fafafa; border: 2px solid #d4d4d4; }
.card h3 { padding: 14px 12px 0; white-space: nowrap; }
.pages { height: 124px; }
.filters { height: 156px; }
.marks { height: 506px; padding: 0 12px; }
.marks h3 { padding: 14px 0 24px; }
.marktype { height: 42px; font-size: 22px; padding-left: 22px; }
.marktype select { padding-left: 12px; }
.marktype .lead { width: 22px; height: 22px; }
.props { display: grid; grid-template-columns: 1fr 1fr 1fr; gap: 12px; margin-top: 12px; font-size: 21px; line-height: 28px; color: #222; }
.props button { height: 84px; border: 2px solid #d4d4d4; display: flex; flex-direction: column; align-items: center; justify-content: space-between; padding: 11px 0 1px; }
.pills { display: flex; flex-direction: column; gap: 6px; margin-top: 18px; }
.pills div { display: flex; align-items: center; justify-content: space-between; padding: 0 8px 0 12px; height: 40px; }
.pills svg { width: 32px; }
.pills button { width: 222px; height: 40px; border-radius: 20px; background: #00b180; color: #fff; text-align: left; padding-left: 21px; }
.pills .blue { background: #4996b2; }

.canvas { flex: 1; display: flex; flex-direction: column; gap: 12px; }
.shelf { height: 56px; display: flex; background: #fafafa; border: 2px solid #d4d4d4; }
.shelf h3 { width: 248px; display: flex; align-items: center; gap: 14px; padding: 2px 0 0 12px; border-right: 2px solid #d4d4d4; }
.shelf svg { margin-bottom: 4px; }
.viz { flex: 1; display: flex; gap: 12px; padding-bottom: 12px; }
.sheet { flex: 1; background: #fff; border: 2px solid #b1b1b1; }
.sheet h2 { font-family: "Noto Sans", sans-serif; font-weight: 300; font-size: 40px; line-height: 60px; padding: 18px 0 0 21px; }
.sheet svg { margin: 96px 0 0 98px; }
.legends { width: 308px; display: flex; flex-direction: column; gap: 12px; }
.legend h3 { height: 58px; }
.sizeitem, .legend ul { background: #fff; font-family: "Noto Sans", sans-serif; font-weight: 300; font-size: 24px; color: #222; }
.sizeitem { height: 42px; display: flex; align-items: center; gap: 9px; padding: 0 0 2px 6px; }
.legend ul { padding-bottom: 2px; }
.legend li { height: 40px; display: flex; align-items: center; gap: 11px; padding-left: 6px; }
.legend li::before { content: ""; width: 28px; height: 28px; background: var(--c); }
.c1 { --c: #4e79a7; } .c2 { --c: #f28e2b; } .c3 { --c: #e15759; }
.c4 { --c: #76b7b2; } .c5 { --c: #59a14f; } .c6 { --c: #edc948; }

/* sheet tabs and status */
.tabs { height: 60px; display: flex; background: linear-gradient(#e7e7e7, #e0e0e0); border-top: 2px solid #ccc; color: #5a5a5a; }
.tabs button { border-right: 2px solid #c8c8c8; display: flex; align-items: center; justify-content: center; padding-top: 2px; }
.tabs .ds { width: 262px; justify-content: flex-start; gap: 11px; padding-left: 19px; }
.t1 { width: 115px; } .t2 { width: 142px; } .t3 { width: 147px; }
.tabs .on { background: #fafafa; font-weight: 700; }
.tabs .new { width: 64px; padding-left: 2px; }
.status { height: 42px; display: flex; background: linear-gradient(#e6e6e6, #d9d9d9); border-top: 2px solid #c8c8c8; font-size: 21px; color: #111; }
.facts { flex: 1; display: flex; align-items: center; gap: 33px; padding-left: 24px; }
.status i { border-left: 2px solid #c0c0c0; }
.s1 { width: 254px; } .s2 { width: 54px; } .s3 { width: 94px; }
.pager, .views { display: flex; align-items: center; border-left: 2px solid #c0c0c0; }
.pager { width: 142px; padding-left: 14px; gap: 16px; }
.pager svg { width: 16px; height: 16px; }
.views { width: 154px; padding-left: 17px; gap: 20px; }
.views svg { width: 22px; height: 22px; }

/* dock */
.desk { height: 88px; display: flex; justify-content: center; background: linear-gradient(90deg, #3a1220, #2a0f1e 4%, #2a0f1e 96%, #2c0a14); }
.dock {
  display: flex;
  padding: 9px 6px 0;
  border-radius: 12px 12px 0 0;
  background: linear-gradient(90deg, #6f5578, #7059b2 5%, #b250bd 11%, #8f42e8 16%, #8a5a8c 23%, #8a5f86 29%, #656aa2 34%, #775789 40%, #8f7570 48%, #a1555c 57%, #c0714f 63%, #a96062 69%, #83566b 74%, #bb5b4c 81%, #b0625f 86%, #9b5468 91%, #f03a4d 95%, #f03448);
}
.app-icon { width: 70px; display: flex; flex-direction: column; align-items: center; gap: 3px; font-family: Inter, sans-serif; }
.app-icon > svg { width: 64px; height: 64px; overflow: visible; }
.run::after { content: ""; width: 8px; height: 8px; border-radius: 50%; background: #160008; }
.sep { width: 31px; padding: 10px 14px 0; }
.sep::before { content: ""; display: block; width: 2px; height: 58px; background: #7e2a38; }
.petals ellipse { mix-blend-mode: multiply; }
.badge { font-size: 15px; fill: #fff; text-anchor: middle; }
.badge.small { font-size: 13px; }
.office { font-size: 23px; font-weight: 700; fill: #fff; text-anchor: middle; }
```
